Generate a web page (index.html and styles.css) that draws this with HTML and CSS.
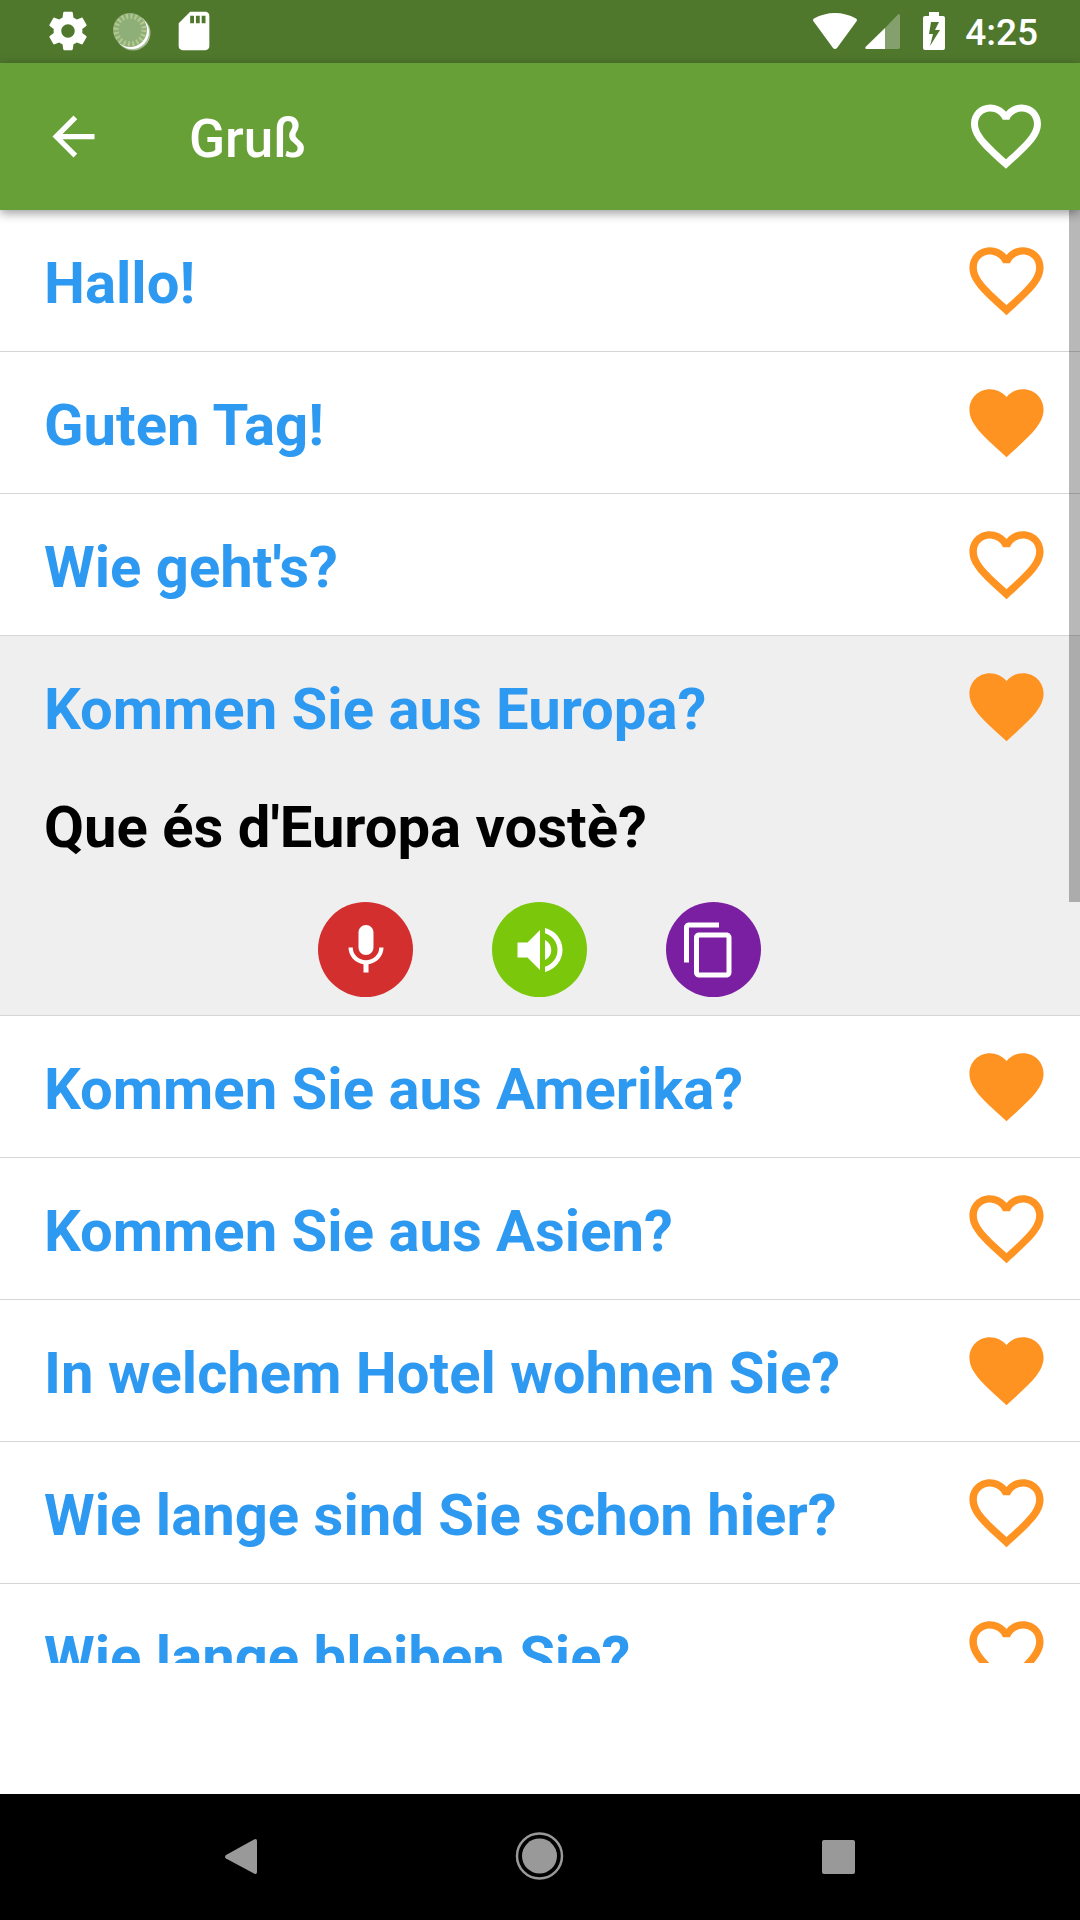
FILE: index.html
```html
<!DOCTYPE html>
<html lang="de">
<head>
<meta charset="utf-8">
<meta name="viewport" content="width=device-width, initial-scale=1">
<title>Gruß</title>
<link rel="stylesheet" href="styles.css">
</head>
<body>
<svg class="sprite" aria-hidden="true">
  <symbol id="heart-outline" viewBox="0 0 24 24"><path d="M16.5 3c-1.74 0-3.41.81-4.5 2.09C10.91 3.81 9.24 3 7.5 3 4.42 3 2 5.42 2 8.5c0 3.78 3.4 6.86 8.55 11.54L12 21.35l1.45-1.32C18.6 15.36 22 12.28 22 8.5 22 5.42 19.58 3 16.5 3zm-4.4 15.55l-.1.1-.1-.1C7.14 14.24 4 11.39 4 8.5 4 6.5 5.5 5 7.5 5c1.54 0 3.04.99 3.57 2.36h1.87C13.46 5.99 14.96 5 16.5 5c2 0 3.5 1.5 3.5 3.5 0 2.89-3.14 5.74-7.9 10.05z"/></symbol>
  <symbol id="heart-full" viewBox="0 0 24 24"><path d="M12 21.35l-1.45-1.32C5.4 15.36 2 12.28 2 8.5 2 5.42 4.42 3 7.5 3c1.74 0 3.41.81 4.5 2.09C13.09 3.81 14.76 3 16.5 3 19.58 3 22 5.42 22 8.5c0 3.78-3.4 6.86-8.55 11.54L12 21.35z"/></symbol>
</svg>
<div class="app">
  <div class="status">
    <div class="status-left">
      <svg class="status-icon" viewBox="0 0 24 24"><path d="M19.43 12.98c.04-.32.07-.64.07-.98s-.03-.66-.07-.98l2.11-1.65c.19-.15.24-.42.12-.64l-2-3.46c-.12-.22-.39-.3-.61-.22l-2.49 1c-.52-.4-1.08-.73-1.69-.98l-.38-2.65C14.46 2.18 14.25 2 14 2h-4c-.25 0-.46.18-.49.42l-.38 2.65c-.61.25-1.17.59-1.69.98l-2.49-1c-.23-.09-.49 0-.61.22l-2 3.46c-.13.22-.07.49.12.64l2.11 1.65c-.04.32-.07.65-.07.98s.03.66.07.98l-2.11 1.65c-.19.15-.24.42-.12.64l2 3.46c.12.22.39.3.61.22l2.49-1c.52.4 1.08.73 1.69.98l.38 2.65c.03.24.24.42.49.42h4c.25 0 .46-.18.49-.42l.38-2.65c.61-.25 1.17-.59 1.69-.98l2.49 1c.23.09.49 0 .61-.22l2-3.46c.12-.22.07-.49-.12-.64l-2.11-1.65zM12 15.5c-1.93 0-3.500-1.57-3.500-3.500s1.57-3.500 3.500-3.500 3.500 1.57 3.500 3.500-1.57 3.500-3.500 3.500z"/></svg>
      <svg class="status-icon" viewBox="0 0 46 46">
        <circle cx="25" cy="25" r="17.500" opacity=".5"/>
        <circle cx="24" cy="24" r="17"/>
        <circle cx="22" cy="22" r="17" fill="#8faf78"/>
        <circle cx="22" cy="22" r="14" fill="none" stroke="#b3c98f" stroke-width="5" stroke-dasharray="2 2.400"/>
      </svg>
      <svg class="status-icon" viewBox="0 0 24 24"><path d="M18 2h-8L4.020 8 4 20c0 1.100.9 2 2 2h12c1.100 0 2-.9 2-2V4c0-1.100-.9-2-2-2zm-6 6h-2V4h2v4zm3 0h-2V4h2v4zm3 0h-2V4h2v4z"/></svg>
    </div>
    <div class="status-right">
      <svg class="wifi" viewBox="0 0 46 38"><path d="M2 10Q0 8 2 6.500Q12 1 23 1T44 6.500Q46 8 44 10L25 36Q23 38 21 36z"/></svg>
      <svg class="signal" viewBox="0 0 36 38"><path opacity=".3" d="M34 2.500Q36 1 36 4V35Q36 37 34 37H21V16z"/><path d="M21 16V37H3Q0 37 2 34.500z"/></svg>
      <svg class="battery" viewBox="0 0 22 38"><path fill-rule="evenodd" d="M6 0H16V4H20Q22 4 22 6V36Q22 38 20 38H2Q0 38 0 36V6Q0 4 2 4H6zM8 10L6 22H10L7 34L17 18H12L16 10z"/></svg>
      <time class="clock">4:25</time>
    </div>
  </div>
  <header class="bar">
    <button class="icon-button" type="button" aria-label="Zurück"><svg class="back" viewBox="0 0 24 24"><path d="M20 11H7.830l5.590-5.590L12 4l-8 8 8 8 1.410-1.410L7.830 13H20v-2z"/></svg></button>
    <h1 class="title">Gruß</h1>
    <button class="icon-button" type="button" aria-label="Favoriten"><svg class="bar-heart"><use href="#heart-outline"/></svg></button>
  </header>
  <main class="content">
    <ul class="list">
      <li class="item"><div class="row"><button class="phrase" type="button">Hallo!</button><button class="icon-button" type="button" aria-label="Merken"><svg class="heart"><use href="#heart-outline"/></svg></button></div></li>
      <li class="item"><div class="row"><button class="phrase" type="button">Guten Tag!</button><button class="icon-button" type="button" aria-label="Gemerkt"><svg class="heart"><use href="#heart-full"/></svg></button></div></li>
      <li class="item"><div class="row"><button class="phrase" type="button">Wie geht's?</button><button class="icon-button" type="button" aria-label="Merken"><svg class="heart"><use href="#heart-outline"/></svg></button></div></li>
      <li class="item item-open">
        <div class="row"><button class="phrase" type="button" aria-expanded="true">Kommen Sie aus Europa?</button><button class="icon-button" type="button" aria-label="Gemerkt"><svg class="heart"><use href="#heart-full"/></svg></button></div>
        <p class="translation" lang="ca">Que és d'Europa vostè?</p>
        <div class="actions">
          <button class="action action-record" type="button" aria-label="Aufnehmen"><svg class="action-icon" viewBox="0 0 24 24"><path d="M12 14c1.660 0 2.990-1.340 2.990-3L15 5c0-1.660-1.340-3-3-3S9 3.340 9 5v6c0 1.660 1.340 3 3 3zm5.300-3c0 3-2.540 5.100-5.300 5.100S6.700 14 6.700 11H5c0 3.410 2.720 6.230 6 6.720V21h2v-3.280c3.280-.48 6-3.300 6-6.720h-1.700z"/></svg></button>
          <button class="action action-play" type="button" aria-label="Anhören"><svg class="action-icon" viewBox="0 0 24 24"><path d="M3 9v6h4l5 5V4L7 9H3zm13.500 3c0-1.770-1.020-3.290-2.500-4.030v8.050c1.480-.73 2.500-2.250 2.500-4.020zM14 3.230v2.060c2.890.86 5 3.540 5 6.710s-2.110 5.850-5 6.710v2.060c4.010-.91 7-4.490 7-8.770s-2.990-7.860-7-8.770z"/></svg></button>
          <button class="action action-copy" type="button" aria-label="Kopieren"><svg class="action-icon" viewBox="2 0 24 24"><path d="M16 1H4c-1.100 0-2 .9-2 2v14h2V3h12V1zm3 4H8c-1.100 0-2 .9-2 2v14c0 1.100.9 2 2 2h11c1.100 0 2-.9 2-2V7c0-1.100-.9-2-2-2zm0 16H8V7h11v14z"/></svg></button>
        </div>
      </li>
      <li class="item"><div class="row"><button class="phrase" type="button">Kommen Sie aus Amerika?</button><button class="icon-button" type="button" aria-label="Gemerkt"><svg class="heart"><use href="#heart-full"/></svg></button></div></li>
      <li class="item"><div class="row"><button class="phrase" type="button">Kommen Sie aus Asien?</button><button class="icon-button" type="button" aria-label="Merken"><svg class="heart"><use href="#heart-outline"/></svg></button></div></li>
      <li class="item"><div class="row"><button class="phrase" type="button">In welchem Hotel wohnen Sie?</button><button class="icon-button" type="button" aria-label="Gemerkt"><svg class="heart"><use href="#heart-full"/></svg></button></div></li>
      <li class="item"><div class="row"><button class="phrase" type="button">Wie lange sind Sie schon hier?</button><button class="icon-button" type="button" aria-label="Merken"><svg class="heart"><use href="#heart-outline"/></svg></button></div></li>
      <li class="item"><div class="row"><button class="phrase" type="button">Wie lange bleiben Sie?</button><button class="icon-button" type="button" aria-label="Merken"><svg class="heart"><use href="#heart-outline"/></svg></button></div></li>
    </ul>
    <div class="scroll-thumb"></div>
  </main>
  <div class="banner"></div>
  <nav class="nav">
    <button class="icon-button" type="button" aria-label="Zurück"><svg class="nav-icon" viewBox="0 0 60 60"><path d="M15 28L43 12.500Q46 11 46 14V45Q46 48 43 46.500L15 31.500Q13 30 15 28z"/></svg></button>
    <button class="icon-button" type="button" aria-label="Startseite"><svg class="nav-icon" viewBox="0 0 60 60"><circle cx="29.500" cy="29" r="17.500"/><circle cx="29.500" cy="29" r="22.500" fill="none" stroke="#999" stroke-width="2.500"/></svg></button>
    <button class="icon-button" type="button" aria-label="Übersicht"><svg class="nav-icon" viewBox="0 0 60 60"><rect x="13" y="13" width="33" height="34" rx="2"/></svg></button>
  </nav>
</div>
</body>
</html>
```
FILE: styles.css
```css
* {
  box-sizing: border-box;
}

body {
  margin: 0;
  background: #fff;
  font-family: Roboto, "Liberation Sans", sans-serif;
}

button {
  padding: 0;
  border: 0;
  background: none;
  color: inherit;
  font: inherit;
}

svg {
  display: block;
  fill: currentColor;
}

.sprite {
  position: absolute;
  width: 0;
  height: 0;
}

.app {
  display: flex;
  flex-direction: column;
  height: 100vh;
}

.icon-button {
  flex: none;
}

/* System status bar */
.status {
  display: flex;
  flex: none;
  align-items: center;
  justify-content: space-between;
  height: 63px;
  padding: 0 42px 1px 45px;
  background: #50782d;
  color: #fff;
}

.status-left {
  display: flex;
  gap: 17px;
}

.status-icon {
  width: 46px;
  height: 46px;
}

.status-right {
  display: flex;
  align-items: center;
}

.wifi {
  width: 46px;
  height: 38px;
}

.signal {
  width: 36px;
  height: 38px;
  margin-left: 6px;
}

.battery {
  width: 22px;
  height: 38px;
  margin-left: 23px;
}

.clock {
  margin-left: 20px;
  padding-top: 4px;
  font-size: 37px;
  font-weight: 500;
  line-height: 44px;
}

/* App bar */
.bar {
  position: relative;
  z-index: 1;
  display: flex;
  flex: none;
  align-items: center;
  height: 147px;
  padding: 0 32px 1px 42px;
  background: #68a038;
  color: #fff;
  box-shadow: 0 3px 10px rgba(0, 0, 0, 0.4);
}

.back {
  width: 63px;
  height: 63px;
}

.title {
  flex: 1;
  margin: 0 0 0 84px;
  padding-top: 6px;
  font-size: 53px;
  font-weight: 500;
  line-height: 62px;
}

.bar-heart {
  width: 84px;
  height: 84px;
}

/* Phrase list */
.content {
  position: relative;
  flex: 1;
  min-height: 0;
}

.list {
  height: 100%;
  margin: 0;
  padding: 0;
  overflow-y: auto;
  scrollbar-width: none;
  list-style: none;
}

.item {
  border-bottom: 1px solid #d6d6d6;
}

.item-open {
  background: #efefef;
}

.row {
  display: flex;
  align-items: center;
  min-height: 141px;
  padding: 0 29px 0 44px;
}

.phrase {
  flex: 1;
  padding-top: 5px;
  color: #2e99f1;
  font-size: 58px;
  font-weight: 700;
  line-height: 68px;
  text-align: left;
}

.heart {
  width: 89px;
  height: 89px;
  color: #ff9322;
}

.translation {
  margin: 0;
  padding: 16px 44px 0;
  color: #000;
  font-size: 58px;
  font-weight: 700;
  line-height: 68px;
}

.actions {
  display: flex;
  justify-content: center;
  gap: 79px;
  padding: 41px 1px 18px 0;
}

.action {
  display: flex;
  align-items: center;
  justify-content: center;
  width: 95px;
  height: 95px;
  border-radius: 50%;
  color: #fff;
}

.action-record {
  background: #d32f2f;
}

.action-play {
  background: #7ac70c;
}

.action-copy {
  background: #7b1fa2;
}

.action-icon {
  width: 60px;
  height: 60px;
}

.scroll-thumb {
  position: absolute;
  top: 0;
  right: 0;
  width: 11px;
  height: 692px;
  background: rgba(0, 0, 0, 0.28);
}

.banner {
  flex: none;
  height: 131px;
}

/* System navigation bar */
.nav {
  display: flex;
  flex: none;
  align-items: center;
  justify-content: center;
  gap: 239px;
  height: 126px;
  background: #000;
  color: #999;
}

.nav-icon {
  width: 60px;
  height: 60px;
}
```
